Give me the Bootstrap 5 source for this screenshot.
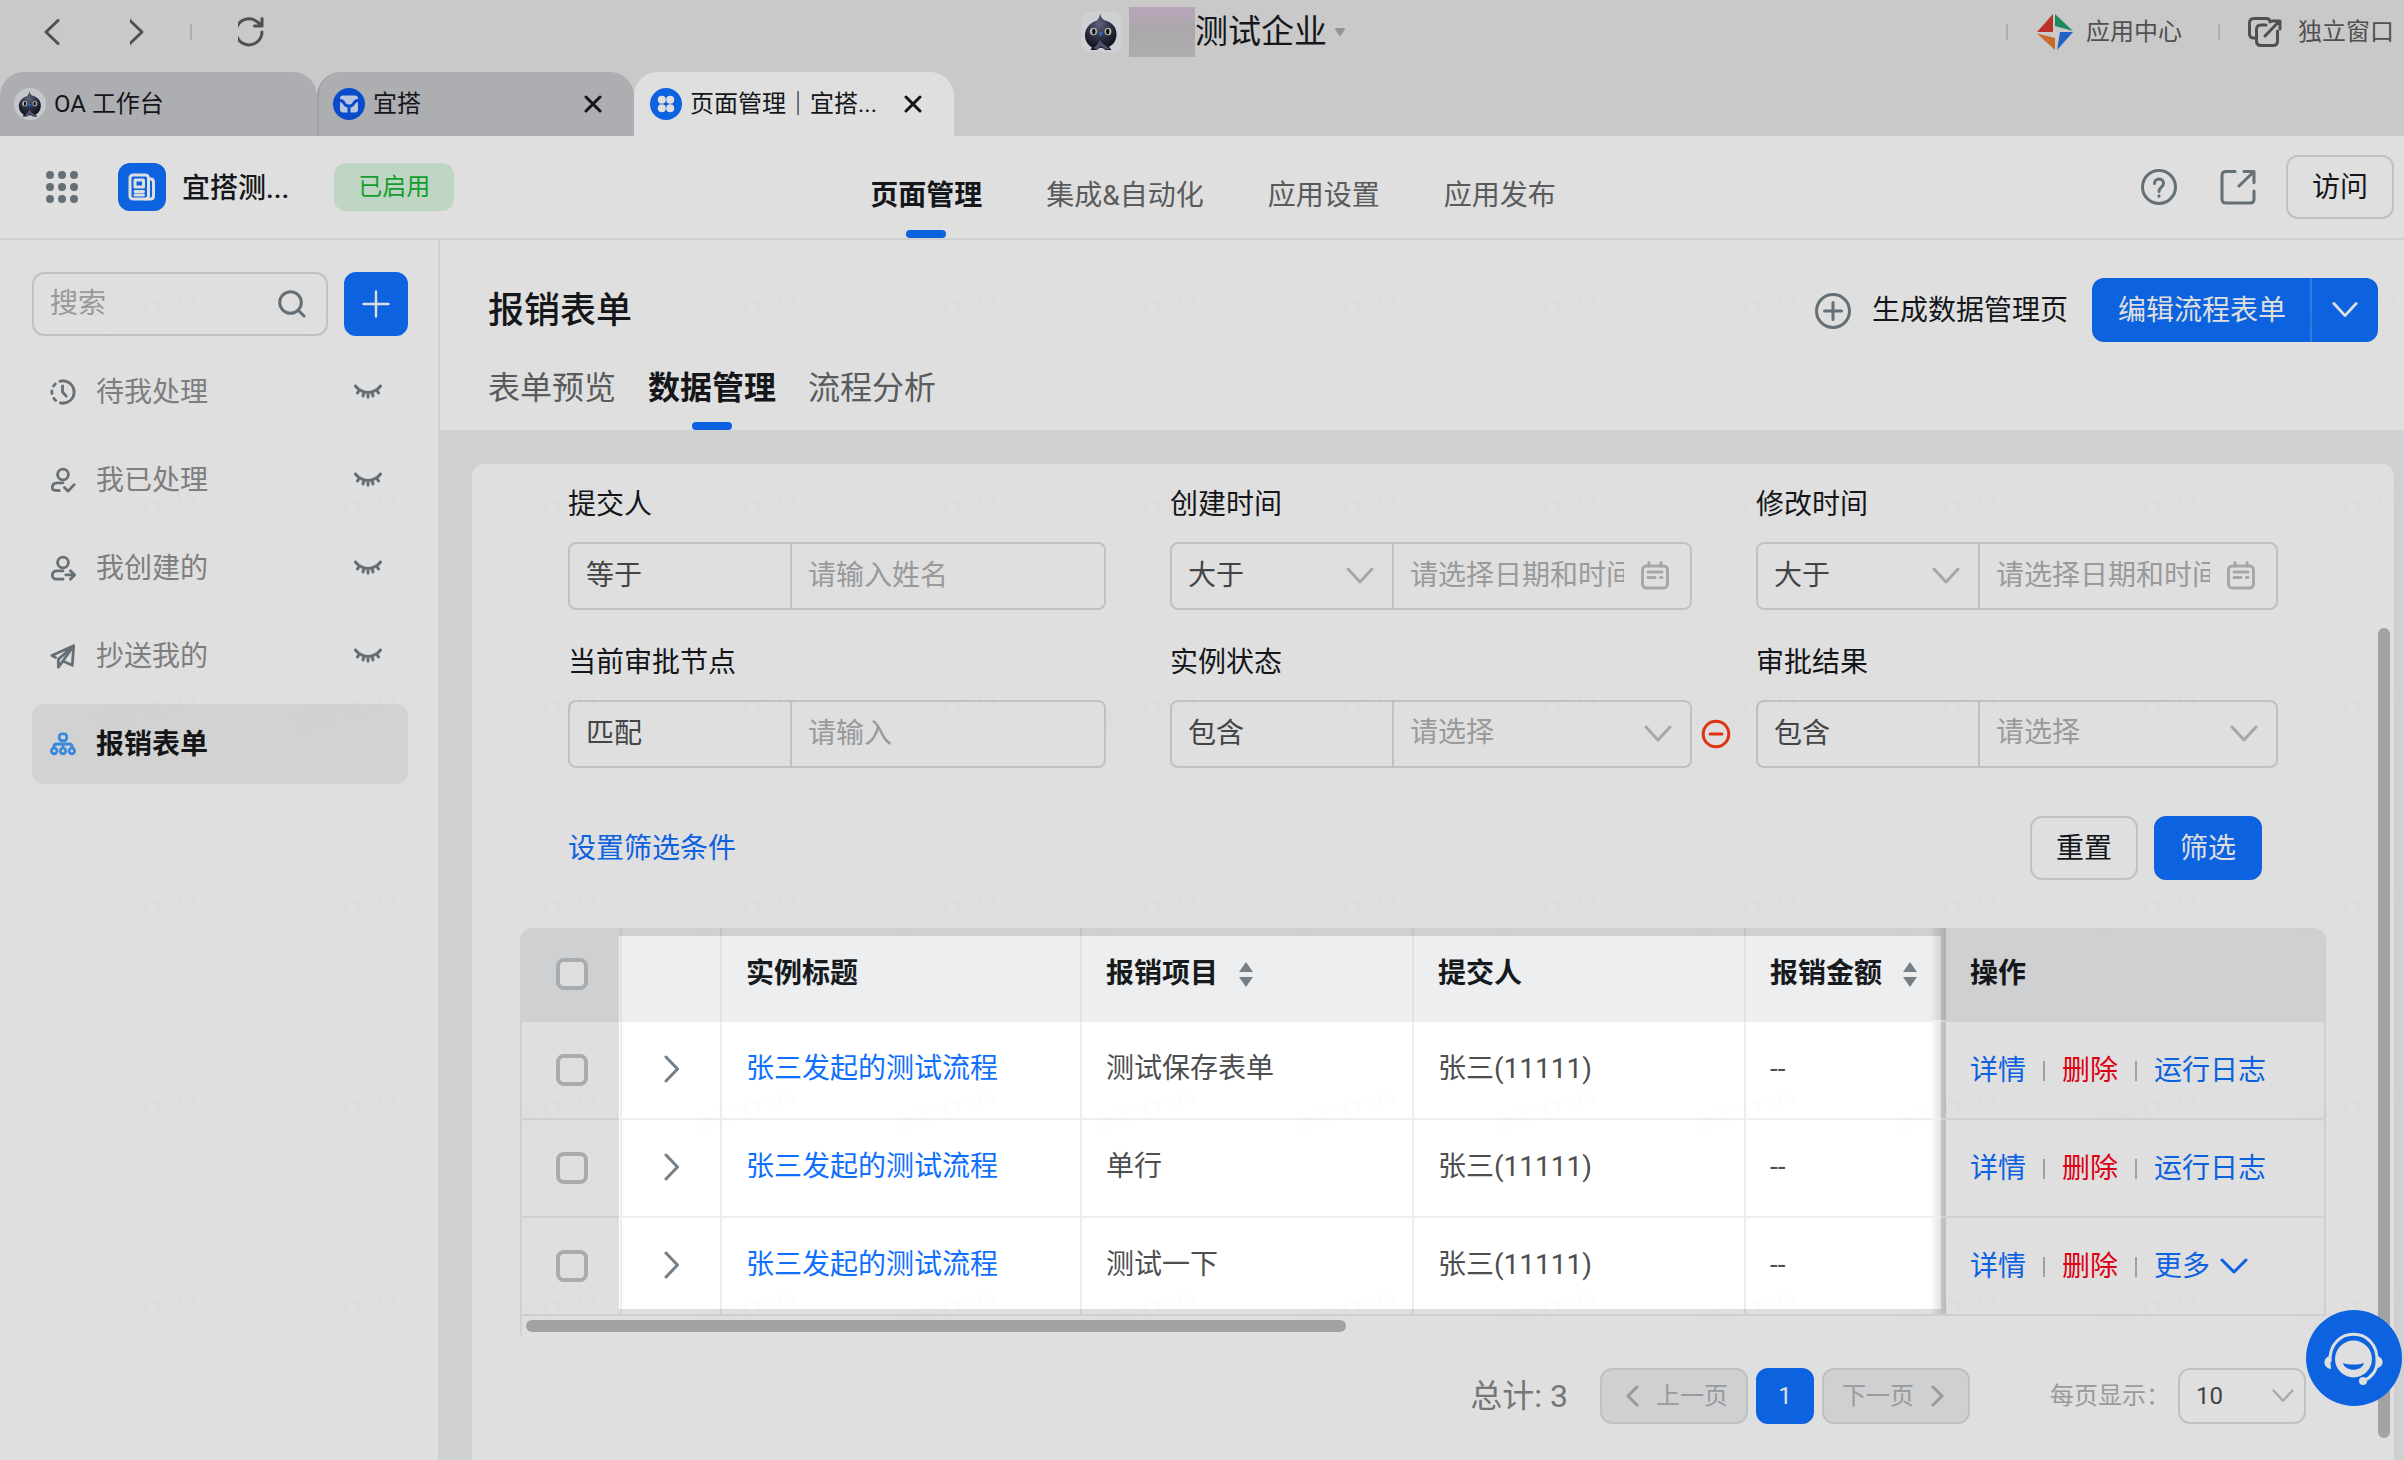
<!DOCTYPE html>
<html lang="zh-CN">
<head>
<meta charset="utf-8">
<meta name="viewport" content="width=device-width, initial-scale=1">
<title>页面管理｜宜搭</title>
<link href="https://cdn.jsdelivr.net/npm/bootstrap@5.3.0/dist/css/bootstrap.min.css" rel="stylesheet">
<style>
:root{--ink:#171a1d;--soft:#66686a;--hint:#aeb0b2;--icon:#747f87;--line:#dcdddf;--blue:#0f70ff;--fill:#edeef0}
body{font-family:Roboto,"Noto Sans CJK SC",sans-serif;font-size:28px;line-height:40px;color:var(--ink);background:#fff;overflow-x:hidden}
svg{display:block;flex:none}
.ico{fill:none;stroke:currentColor;stroke-width:3;stroke-linecap:round;stroke-linejoin:round}
a{text-decoration:none;color:inherit}
button{flex:none}
.plain{background:none;border:0;padding:0;color:inherit}
.tint{color:var(--icon)}
.pale{color:#bcc0c4}
/* window chrome */
.titlebar{background:#e6e6e6;padding-bottom:8px;font-size:24px;color:#5c5c5c}
.side{flex:1 1 0}
.winctl{gap:46px;padding-left:40px}
.wintools{gap:28px;padding-right:10px}
.vbar{width:2px;height:16px;background:#c6c7cb}
.corp{font-size:33px;line-height:64px;color:var(--ink);padding-right:8px}
.masked{width:66px;height:50px;background:linear-gradient(#d6bcd6,#c4c0c4 40%,#c6c6c6)}
.wintabs{background:#e6e6e6;font-size:24px;line-height:64px}
.wintab{width:317px;height:64px;border-radius:24px 24px 0 0;background:#c6c7cb;padding:0 32px 0 14px}
.wintab+.wintab{border-left:2px solid #b4b6ba}
.wintab.current{width:320px;background:#fff;border-color:#fff}
/* application bar */
.appbar{height:104px;border-bottom:2px solid #ededed;padding:0 10px 0 46px}
.applogo{width:48px;height:48px;border-radius:12px;background:var(--blue);color:#fff;margin-left:40px}
.state{background:#dcf5e2;color:#14b534;border-radius:12px;font-size:24px;line-height:48px;padding:0 24px;margin-left:45px}
.appname{padding-top:4px}
.mainnav{gap:64px;padding-right:14px;color:var(--soft)}
.mainnav a{display:block;padding-top:36px;line-height:48px}
.tabmark a.on{color:var(--ink);font-weight:700}
.tabmark a.on::after{content:"";display:block;width:40px;height:8px;border-radius:4px;background:var(--blue);margin:10px auto 0}
.ctl{height:64px;border:2px solid var(--line);border-radius:12px;background:#fff;color:var(--ink);padding:2px 24px 0;line-height:56px}
.ctl.solid{background:var(--blue);border-color:var(--blue);color:#fff}
.ctl.sq{width:64px;padding:0}
.appacts{gap:42px}
.appacts .ctl{margin-left:-12px}
/* side menu */
.sidemenu{width:440px;flex:none;border-right:2px solid #ededed;padding:32px 30px 0 32px}
.finder{border:2px solid var(--line);border-radius:12px;height:64px;padding:0 20px 0 16px;min-width:0}
.bare{border:0;background:none;outline:0;min-width:0;padding:0;color:inherit}
.finder .bare{width:100%}
::placeholder{color:var(--hint);opacity:1}
.entry{height:80px;border-radius:12px;padding:0 26px 0 18px;color:#919191}
.entry span{padding:2px 0 0 20px}
.entry svg{color:var(--icon)}
.entry.on{background:#f1f1f1;color:var(--ink);font-weight:700}
.entry.on svg{color:#429eff}
/* page head */
.pagehead{padding:38px 26px 0 48px}
.pagehead h1{font-size:36px;line-height:60px;padding-top:2px;font-weight:500;margin:0}
.maker{gap:20px;padding-top:2px}
.subtabs{gap:32px;font-size:32px;line-height:48px;padding-top:22px;color:var(--soft);height:88px}
.split{border-radius:12px;overflow:hidden;background:var(--blue)}
.split button{height:64px;background:none;border:0;color:#fff;padding:2px 24px 0 26px}
.split button+button{border-left:2px solid #3c8cff;padding:0 20px}
.canvas{background:var(--fill);padding:34px 10px 0 32px}
.sheet{background:#fff;border-radius:12px 12px 0 0;padding:20px 68px 36px 48px}
/* filters */
.filters{display:grid;grid-template-columns:minmax(0,538fr) minmax(0,522fr) minmax(0,522fr);gap:32px 64px;padding:0 48px}
.filters .name{display:block;line-height:42px;margin-bottom:16px}
.combo{height:68px;border:2px solid var(--line);border-radius:8px}
.combo select,.pager select{appearance:none;color:#4c4e50}
.combo .rule{width:222px;flex:none;padding-left:16px;border-right:2px solid var(--line);height:64px}
.combo .val{flex:1 1 0;width:0;padding:0 0 2px 16px;height:64px}
.combo.dated{padding-right:20px}
.combo.dated .val{margin-right:16px;padding-left:0;border-left:16px solid transparent}
.combo select.val{color:var(--hint)}
.drop{background:url("data:image/svg+xml,%3Csvg xmlns='http://www.w3.org/2000/svg' width='28' height='18'%3E%3Cpath d='M2 2l12 13L26 2' fill='none' stroke='%23bcc0c4' stroke-width='3' stroke-linecap='round' stroke-linejoin='round'/%3E%3C/svg%3E") no-repeat right 18px center}
.minus{width:48px;margin-right:-48px;color:#ff3b14}
.formfoot{padding:48px 64px 48px 48px}
.formfoot a{color:var(--blue);padding-top:2px}
/* data grid */
.gridbox{position:relative}
.gridbox .table{--bs-table-bg:transparent;table-layout:fixed;border-collapse:separate;border-spacing:0;margin:0;color:#4c4e50;border:2px solid var(--fill);border-width:0 2px;border-radius:12px 12px 0 0;overflow:hidden}
.gridbox .table>*>tr>*{height:98px;padding:0 0 2px 24px;vertical-align:middle;border-bottom:2px solid var(--fill);border-right:2px solid #eeeeef;background:#fff;white-space:nowrap;text-align:left}
.gridbox .table>thead>tr>*{height:94px;background:var(--fill);color:var(--ink);font-weight:700;border-right-color:#e0e1e3;padding-bottom:0}
.gridbox .table>*>tr>.tick{padding:0 0 0 34px;line-height:0}
.gridbox .table>*>tr>.acts{border-right:0;position:relative}
.gridbox .table>tbody>tr>.acts{padding-top:2px;padding-bottom:0}
.gridbox .table>*>tr>.noline{border-right:0}
.acts::before{content:"";position:absolute;top:0;bottom:0;left:-16px;width:16px;background:linear-gradient(90deg,transparent,rgba(0,0,0,.16))}
.gridbox a{color:var(--blue)}
.gridbox .acts a.del{color:#fc0016}
.acts .vbar{height:20px;background:#b5b8ba;margin:0 17px}
.opener{margin-left:18px;color:var(--icon)}
.tickbox{appearance:none;width:32px;height:32px;border:4px solid #c2c5c8;border-radius:8px;background:#fff;margin:0}
.hscroll{height:20px;border-left:2px solid var(--fill);padding:4px}
.hscroll div{width:820px;max-width:46%;height:12px;border-radius:6px;background:#bababa}
.spot{position:absolute;left:99px;right:385px;top:8px;bottom:27px;box-shadow:0 0 0 3000px rgba(0,0,0,.125);pointer-events:none;z-index:2000}
/* pager */
.pager{padding:32px 20px 0 0;font-size:24px;color:var(--hint)}
.pager .total{font-size:32px;color:#858789;margin-right:32px}
.pager label{margin-left:80px}
.pg{height:56px;border:2px solid var(--line);border-radius:12px;background:var(--fill);color:var(--hint);padding:0 18px;line-height:48px}
.pg.now{background:var(--blue);border-color:var(--blue);color:#fff;width:58px}
.size{width:128px;height:56px;border:2px solid var(--line);border-radius:12px;padding-left:16px;background-position:right 10px center;background-size:22px}
.vthumb{position:absolute;right:4px;top:164px;bottom:22px;width:12px;border-radius:6px;background:#bababa}
.helper{position:fixed;right:2px;bottom:54px;width:96px;height:96px;border-radius:50%;background:var(--blue);border:0;padding:0;z-index:20}
.wm{position:absolute;inset:0;pointer-events:none;z-index:10;background:url("data:image/svg+xml,%3Csvg xmlns='http://www.w3.org/2000/svg' width='200' height='200'%3E%3Ctext transform='translate(97 196) rotate(-16)' font-family='Roboto,Noto Sans CJK SC' font-size='21' fill='%23000' fill-opacity='.012'%3E张三 11111%3C/text%3E%3C/svg%3E") 0 0/200px 200px}
</style>
</head>
<body class="d-flex flex-column min-vh-100">
<svg width="0" height="0" class="position-absolute" aria-hidden="true">
  <defs>
    <radialGradient id="feather" cx=".45" cy=".3" r=".75"><stop offset="0" stop-color="#6a7190"/><stop offset=".6" stop-color="#2a2e42"/><stop offset="1" stop-color="#0d0f1a"/></radialGradient>
  </defs>
  <symbol id="bird" viewBox="0 0 40 40">
    <path d="M19 1c0 4-1.500 5.500-3 7.500C8 11 4 17 4 23c0 6 3 10 7 12.500L9.500 38h6l3-2h3l3 2h6l-2.500-3C33 32 35.500 28 35.500 22 35.500 15 31 10 23 8c-2.500-2-3.500-4-4-7z" fill="url(#feather)"/>
    <path d="M12 36c3-1 5-5 7-8 2 4 7 6 10 9l-4 .5-5-3-4 3z" fill="#595e78"/>
    <ellipse cx="12.500" cy="19.500" rx="3.600" ry="3.800" fill="#d8d3c2"/><ellipse cx="27" cy="19.500" rx="3.400" ry="3.800" fill="#d8d3c2"/>
    <ellipse cx="12.800" cy="19.500" rx="1.700" ry="2.700" fill="#0b0c12"/><ellipse cx="26.700" cy="19.500" rx="1.700" ry="2.700" fill="#0b0c12"/>
    <path d="M17.500 20.500h4.500l-2.200 4z" fill="#2f83f0"/>
  </symbol>
  <symbol id="lash" viewBox="0 0 28 16"><path d="M1.500 2C8 10.500 20 10.500 26.500 2M5 6.500 3.500 9M9.800 9 9 12M14 9.500V13M18.200 9l.8 3M23 6.500 24.500 9"/></symbol>
  <symbol id="cal" viewBox="0 0 30 30"><rect x="2.500" y="5" width="25" height="22" rx="4"/><path d="M9 1.500V5M21 1.500V5M8 11h14M8 16.500h7M20.500 16.500h1.500"/></symbol>
  <symbol id="next" viewBox="0 0 16 28"><path d="M2 2l11.500 12L2 26"/></symbol>
  <symbol id="cross" viewBox="0 0 18 18"><path d="M2 2l14 14M16 2 2 16"/></symbol>
  <symbol id="sort" viewBox="0 0 14 26"><path d="M7 1 14 11H0zM7 26 14 16H0z" fill="#747f87" stroke="none"/></symbol>
  <symbol id="minusc" viewBox="0 0 30 30"><circle cx="15" cy="15" r="12.800"/><path d="M9 15h12"/></symbol>
</svg>

<header class="titlebar d-flex align-items-center">
  <div class="side winctl d-flex align-items-center">
    <button class="plain" aria-label="后退"><svg class="ico" width="20" height="26" viewBox="0 0 20 26"><path d="M18 1.500 6 13l12 11.500"/></svg></button>
    <button class="plain ms-4" aria-label="前进"><svg class="ico" width="14" height="26" viewBox="2 0 14 26"><path d="M2 1.500 14 13 2 24.500"/></svg></button>
    <span class="vbar"></span>
    <button class="plain ms-n2" aria-label="刷新"><svg class="ico" width="30" height="30" viewBox="4 0 30 30"><path d="M28 15A13 13 0 1 1 23.500 5L28 9M28 1.500V9h-7.500"/></svg></button>
  </div>
  <div class="corp d-flex align-items-center">
    <svg width="40" height="40" viewBox="0 0 40 40"><rect width="40" height="40" rx="7" fill="#eceef2"/><use href="#bird"/></svg>
    <span class="masked ms-2"></span><span class="text-nowrap">测试企业</span>
    <svg class="ms-2" width="10" height="8" viewBox="0 0 10 8"><path d="M0 1.500C0 0 1 0 2 0h6c1 0 2 0 2 1.500L5.500 8h-1z" fill="#aaa"/></svg>
  </div>
  <div class="side wintools d-flex align-items-center justify-content-end text-nowrap">
    <span class="vbar"></span>
    <a href="#" class="d-flex align-items-center">
      <svg width="38" height="36" viewBox="0 0 38 36"><path d="M17 0v18H1z" fill="#d63a34"/><path d="M19 0l18 17-18-5z" fill="#1f9e6b"/><path d="M1 19.500 19 24v12z" fill="#e37b2f"/><path d="M37 18 21 36l3-18z" fill="#2871e0"/></svg>
      <span class="ms-2 ps-1 pe-2">应用中心</span></a>
    <span class="vbar"></span>
    <a href="#" class="d-flex align-items-center">
      <svg class="ico" width="34" height="30" viewBox="0 0 34 30"><path d="M6 21c-3 0-4.500-1.500-4.500-4V6c0-3 1.500-4.500 4.500-4.500h12c2.500 0 4 1.500 4 3.500M18 8h-5c-3 0-4.500 1.500-4.500 4.500V24c0 3 1.500 4.500 4.500 4.500h12c3 0 4.500-1.500 4.500-4.500V14M17 19 31.500 4M24 4h8v8"/></svg>
      <span class="ms-3">独立窗口</span></a>
  </div>
</header>

<nav class="wintabs d-flex" aria-label="窗口标签">
  <div class="wintab d-flex align-items-center"><svg width="32" height="32" viewBox="0 0 32 32"><circle cx="16" cy="16" r="16" fill="#e2e4ea"/><use href="#bird" x="2" y="1" width="28" height="30"/></svg><a href="#" class="ms-2">OA 工作台</a></div>
  <div class="wintab d-flex align-items-center"><svg width="32" height="32" viewBox="0 0 32 32"><circle cx="16" cy="16" r="16" fill="#0b56e8"/><rect x="7" y="7.500" width="18" height="17" rx="3" fill="#d5e3ff"/><path d="M7 12.500c4 0 3.500 3 5.500 4.500s2.500 1 3.500 1 1.500.5 3.500-1 1.500-4.500 5.500-4.500M16 17v8" fill="none" stroke="#0b56e8" stroke-width="3"/></svg><a href="#" class="ms-2 flex-grow-1">宜搭</a><button class="plain" aria-label="关闭"><svg class="ico" width="18" height="18" viewBox="0 0 18 18"><use href="#cross"/></svg></button></div>
  <div class="wintab current d-flex align-items-center"><svg width="32" height="32" viewBox="0 0 32 32"><circle cx="16" cy="16" r="16" fill="#0f70ff"/><g fill="#fff"><circle cx="11.800" cy="11.800" r="4"/><circle cx="20.200" cy="11.800" r="4"/><circle cx="11.800" cy="20.200" r="4"/><circle cx="20.200" cy="20.200" r="4"/></g></svg><a href="#" class="ms-2 flex-grow-1 text-nowrap">页面管理｜宜搭...</a><button class="plain" aria-label="关闭"><svg class="ico" width="18" height="18" viewBox="0 0 18 18"><use href="#cross"/></svg></button></div>
</nav>

<div class="position-relative d-flex flex-column flex-grow-1">
  <div class="appbar d-flex">
    <div class="side d-flex align-items-center">
      <button class="plain" aria-label="应用列表"><svg width="32" height="32" viewBox="0 0 32 32" fill="#747f87"><circle cx="4" cy="4" r="4"/><circle cx="16" cy="4" r="4"/><circle cx="28" cy="4" r="4"/><circle cx="4" cy="16" r="4"/><circle cx="16" cy="16" r="4"/><circle cx="28" cy="16" r="4"/><circle cx="4" cy="28" r="4"/><circle cx="16" cy="28" r="4"/><circle cx="28" cy="28" r="4"/></svg></button>
      <span class="applogo d-flex align-items-center justify-content-center"><svg class="ico" width="28" height="28" viewBox="0 0 28 28"><rect x="2" y="2" width="18.500" height="24" rx="3"/><rect x="7" y="7" width="8.500" height="7"/><path d="M7 18.500h8.500M7 22h8.500M20.500 6h2c2 0 3 1 3 3v14c0 2-1 3-3 3h-5"/></svg></span>
      <span class="appname ms-3 fw-medium text-nowrap">宜搭测...</span>
      <span class="state text-nowrap">已启用</span>
    </div>
    <nav class="mainnav tabmark d-flex text-nowrap">
      <a href="#" class="on">页面管理</a><a href="#">集成&amp;自动化</a><a href="#">应用设置</a><a href="#">应用发布</a>
    </nav>
    <div class="side appacts tint d-flex align-items-center justify-content-end">
      <button class="plain" aria-label="帮助"><svg class="ico" width="38" height="38" viewBox="0 0 38 38"><circle cx="19" cy="19" r="16.500"/><path d="M14.500 15.500c0-6 9-6 9 0 0 3.500-4.500 4-4.500 8M19 27.800v.4"/></svg></button>
      <button class="plain" aria-label="打开"><svg class="ico" width="36" height="36" viewBox="0 0 36 36"><path d="M15 2.500H6C3.500 2.500 2 4 2 6.500V30c0 2.500 1.500 4 4 4h24c2.500 0 4-1.500 4-4v-8M24 2.500h10v11M34 2.500 19 17"/></svg></button>
      <button class="ctl">访问</button>
    </div>
  </div>

  <div class="d-flex flex-grow-1">
    <aside class="sidemenu">
      <div class="d-flex gap-3 mb-3">
        <div class="finder d-flex align-items-center flex-grow-1">
          <input class="bare" type="search" placeholder="搜索" aria-label="搜索">
          <svg class="ico tint" width="28" height="28" viewBox="0 0 28 28"><circle cx="12.500" cy="12.500" r="10.800"/><path d="M20.500 20.500 26 26"/></svg>
        </div>
        <button class="ctl solid sq d-flex align-items-center justify-content-center" aria-label="新建"><svg class="ico" width="28" height="28" viewBox="0 0 28 28"><path d="M14 1.500v25M1.500 14h25" stroke-width="2.400"/></svg></button>
      </div>
      <nav class="d-flex flex-column gap-2">
        <a href="#" class="entry d-flex align-items-center"><svg class="ico" width="26" height="26" viewBox="0 0 28 28"><path d="M14 2a12 12 0 0 1 0 24"/><path d="M14 26A12 12 0 0 1 14 2" stroke-dasharray="3 5.500"/><path d="M13.500 7.500V14l4 4.500"/></svg><span class="flex-grow-1">待我处理</span><svg class="ico" width="28" height="16"><use href="#lash"/></svg></a>
        <a href="#" class="entry d-flex align-items-center"><svg class="ico" width="26" height="26" viewBox="0 0 28 28"><circle cx="14" cy="8" r="5.800"/><path d="M14 17H8c-4 0-5.500 2-5.500 5s1 3.500 7.500 3.500M15.500 22l4 4 6.500-7"/></svg><span class="flex-grow-1">我已处理</span><svg class="ico" width="28" height="16"><use href="#lash"/></svg></a>
        <a href="#" class="entry d-flex align-items-center"><svg class="ico" width="26" height="26" viewBox="0 0 28 28"><circle cx="14" cy="8" r="5.800"/><path d="M14 17H8c-4 0-5.500 2-5.500 4.500s1.500 4.500 4 4.500H14M17 21.500h9M22 17l4.500 4.500L22 26"/></svg><span class="flex-grow-1">我创建的</span><svg class="ico" width="28" height="16"><use href="#lash"/></svg></a>
        <a href="#" class="entry d-flex align-items-center"><svg class="ico" width="26" height="26" viewBox="0 0 28 28"><path d="M6 15.500 2 13.500 25.500 3 24 24l-9-4M9 17.500 25.500 3 13.500 20M9 17.500V26l4.500-6"/></svg><span class="flex-grow-1">抄送我的</span><svg class="ico" width="28" height="16"><use href="#lash"/></svg></a>
        <a href="#" class="entry on d-flex align-items-center"><svg class="ico" width="26" height="26" viewBox="0 0 28 28"><rect x="10" y="3" width="8" height="7.500" rx="3"/><path d="M4 18c0-3 1-4 3.500-4h13c2.500 0 3.500 1 3.500 4M14 14v4"/><circle cx="4.500" cy="21.500" r="3"/><circle cx="14" cy="21.500" r="3"/><circle cx="23.500" cy="21.500" r="3"/></svg><span>报销表单</span></a>
      </nav>
    </aside>

    <main class="flex-grow-1 d-flex flex-column" style="min-width:0">
      <div class="pagehead">
        <div class="d-flex align-items-center">
          <h1 class="flex-grow-1">报销表单</h1>
          <button class="plain maker d-flex align-items-center me-4"><svg class="ico tint" width="38" height="38" viewBox="0 0 38 38"><circle cx="19" cy="19" r="16.500"/><path d="M19 10.500v17M10.500 19h17"/></svg><span>生成数据管理页</span></button>
          <div class="split d-flex"><button>编辑流程表单</button><button aria-label="更多"><svg class="ico" width="26" height="18" viewBox="0 0 28 18"><path d="M2 2l12 13L26 2"/></svg></button></div>
        </div>
        <nav class="subtabs tabmark d-flex"><a href="#">表单预览</a><a href="#" class="on">数据管理</a><a href="#">流程分析</a></nav>
      </div>

      <div class="canvas flex-grow-1 d-flex flex-column">
        <section class="sheet position-relative flex-grow-1">
          <form>
            <div class="filters">
              <div><label class="name" for="f1">提交人</label>
                <div class="combo d-flex"><select class="bare rule" aria-label="提交人条件"><option>等于</option></select><input id="f1" class="bare val" placeholder="请输入姓名"></div></div>
              <div><label class="name" for="f2">创建时间</label>
                <div class="combo dated d-flex align-items-center"><select class="bare rule drop" aria-label="创建时间条件"><option>大于</option></select><input id="f2" class="bare val" placeholder="请选择日期和时间"><svg class="ico pale" width="30" height="30"><use href="#cal"/></svg></div></div>
              <div><label class="name" for="f3">修改时间</label>
                <div class="combo dated d-flex align-items-center"><select class="bare rule drop" aria-label="修改时间条件"><option>大于</option></select><input id="f3" class="bare val" placeholder="请选择日期和时间"><svg class="ico pale" width="30" height="30"><use href="#cal"/></svg></div></div>
              <div><label class="name" for="f4">当前审批节点</label>
                <div class="combo d-flex"><select class="bare rule" aria-label="节点条件"><option>匹配</option></select><input id="f4" class="bare val" placeholder="请输入"></div></div>
              <div><label class="name" for="f5">实例状态</label>
                <div class="d-flex"><div class="combo d-flex flex-grow-1"><select class="bare rule" aria-label="状态条件"><option>包含</option></select><select id="f5" class="bare val drop"><option>请选择</option></select></div>
                <button type="button" class="plain minus d-flex align-items-center justify-content-center" aria-label="移除条件"><svg class="ico" width="30" height="30"><use href="#minusc"/></svg></button></div></div>
              <div><label class="name" for="f6">审批结果</label>
                <div class="combo d-flex"><select class="bare rule" aria-label="结果条件"><option>包含</option></select><select id="f6" class="bare val drop"><option>请选择</option></select></div></div>
            </div>
            <div class="formfoot d-flex align-items-center gap-3">
              <a href="#" class="me-auto">设置筛选条件</a>
              <button type="reset" class="ctl">重置</button><button type="button" class="ctl solid">筛选</button>
            </div>
          </form>

          <div class="gridbox">
            <table class="table">
              <colgroup><col style="width:100px"><col style="width:100px"><col style="width:360px"><col><col><col style="width:200px"><col style="width:378px"></colgroup>
              <thead><tr>
                <th class="tick"><input type="checkbox" class="tickbox" aria-label="全选"></th><th></th><th>实例标题</th>
                <th><span class="d-flex align-items-center">报销项目<svg class="ms-3" width="24" height="26" viewBox="-5 0 24 26"><use href="#sort" width="14" height="26"/></svg></span></th>
                <th>提交人</th>
                <th class="noline"><span class="d-flex align-items-center">报销金额<svg class="ms-3" width="24" height="26" viewBox="-5 0 24 26"><use href="#sort" width="14" height="26"/></svg></span></th>
                <th class="acts">操作</th>
              </tr></thead>
              <tbody>
                <tr><td class="tick"><input type="checkbox" class="tickbox" aria-label="选择第1行"></td><td><button class="plain opener d-block" aria-label="展开"><svg class="ico" width="16" height="28"><use href="#next"/></svg></button></td><td><a href="#">张三发起的测试流程</a></td><td>测试保存表单</td><td>张三(11111)</td><td class="noline">--</td><td class="acts"><div class="d-flex align-items-center"><a href="#">详情</a><span class="vbar"></span><a href="#" class="del">删除</a><span class="vbar"></span><a href="#">运行日志</a></div></td></tr>
                <tr><td class="tick"><input type="checkbox" class="tickbox" aria-label="选择第2行"></td><td><button class="plain opener d-block" aria-label="展开"><svg class="ico" width="16" height="28"><use href="#next"/></svg></button></td><td><a href="#">张三发起的测试流程</a></td><td>单行</td><td>张三(11111)</td><td class="noline">--</td><td class="acts"><div class="d-flex align-items-center"><a href="#">详情</a><span class="vbar"></span><a href="#" class="del">删除</a><span class="vbar"></span><a href="#">运行日志</a></div></td></tr>
                <tr><td class="tick"><input type="checkbox" class="tickbox" aria-label="选择第3行"></td><td><button class="plain opener d-block" aria-label="展开"><svg class="ico" width="16" height="28"><use href="#next"/></svg></button></td><td><a href="#">张三发起的测试流程</a></td><td>测试一下</td><td>张三(11111)</td><td class="noline">--</td><td class="acts"><div class="d-flex align-items-center"><a href="#">详情</a><span class="vbar"></span><a href="#" class="del">删除</a><span class="vbar"></span><a href="#" class="d-flex align-items-center">更多<svg class="ico ms-2" width="30" height="18" viewBox="-2 0 30 18"><path d="M2 2l12 12L26 2"/></svg></a></div></td></tr>
              </tbody>
            </table>
            <div class="hscroll"><div></div></div>
            <div class="spot"></div>
          </div>

          <div class="pager d-flex align-items-center justify-content-end">
            <span class="total">总计: 3</span>
            <div class="d-flex gap-2">
              <button class="pg d-flex align-items-center" disabled><svg class="ico ms-1 me-3" width="16" height="22" viewBox="0 0 16 22"><path d="M13 2 4 11l9 9"/></svg>上一页</button>
              <button class="pg now">1</button>
              <button class="pg d-flex align-items-center" disabled>下一页<svg class="ico ms-3 me-1" width="16" height="22" viewBox="0 0 16 22"><path d="M3 2l9 9-9 9"/></svg></button>
            </div>
            <label for="ps">每页显示：</label>
            <select id="ps" class="bare size drop ms-2"><option>10</option></select>
          </div>
          <div class="vthumb"></div>
        </section>
      </div>
    </main>
  </div>
  <div class="wm"></div>
</div>

<button class="helper" aria-label="在线客服">
  <svg width="96" height="96" viewBox="0 0 96 96"><circle cx="47.500" cy="49" r="18.500" fill="#fff"/><path d="M37 53c6 2 15 2 21 0-2 9-19 9-21 0z" fill="#0f70ff"/><path d="M24 52C22 15 73 15 71 52c0 9-6 16-14 19" fill="none" stroke="#fff" stroke-width="3"/><path d="M24 46c-8 2-7 12 1 13zM71 46c8 2 7 11 0 12z" fill="#fff"/><circle cx="57" cy="71" r="4" fill="#fff"/></svg>
</button>
<script src="https://cdn.jsdelivr.net/npm/bootstrap@5.3.0/dist/js/bootstrap.bundle.min.js"></script>
</body>
</html>
